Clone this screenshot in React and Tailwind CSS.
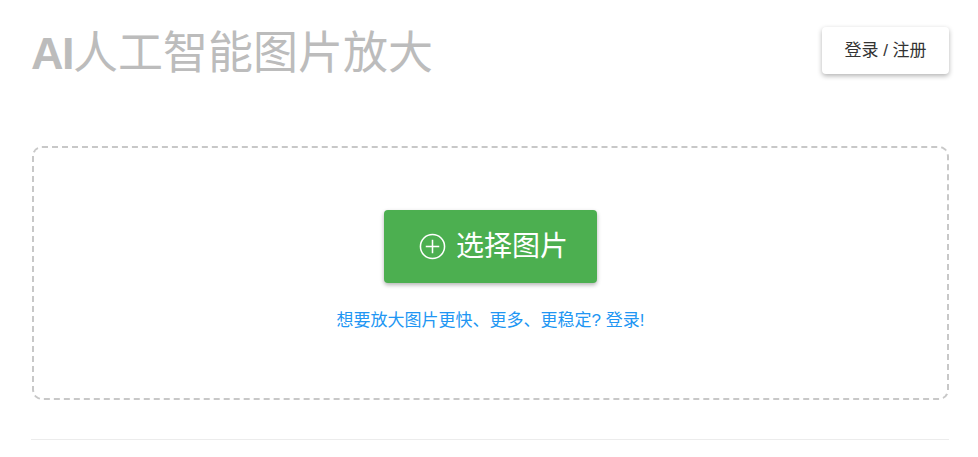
export default function App() {
  const font = { fontFamily: '"Liberation Sans", "Noto Sans CJK SC", sans-serif' };
  return (
    <div className="w-full bg-white pl-[31px] pr-[29px]" style={font}>
      <div className="flex items-center justify-between h-[47px] mt-[27px]">
        <h1 className="text-[45px] leading-none text-[#bcbcbc] font-normal tracking-normal mt-[6px]">
          <span className="font-bold tracking-[-1.5px]">AI</span>人工智能图片放大
        </h1>
        <button className="h-[47px] w-[127px] rounded-[4px] bg-white text-[17px] text-[#333] shadow-[0_2px_5px_rgba(0,0,0,0.3)]">
          登录 / 注册
        </button>
      </div>
      <div className="mt-[72px] ml-[1px] h-[254px] rounded-[10px] border-2 border-dashed border-[#c8c8c8] flex flex-col items-center">
        <button className="mt-[62px] h-[73px] w-[213px] rounded-[4px] bg-[#4caf50] text-white text-[28px] flex items-center justify-start pl-[35px] gap-[10px] shadow-[0_2px_4px_rgba(0,0,0,0.3)]">
          <svg width="27" height="27" viewBox="0 0 28 28" fill="none" stroke="white" strokeWidth="1.6">
            <circle cx="14" cy="14" r="12.5" />
            <line x1="14" y1="7" x2="14" y2="21" />
            <line x1="7" y1="14" x2="21" y2="14" />
          </svg>
          <span className="leading-none">选择图片</span>
        </button>
        <a className="mt-[29px] text-[17px] leading-none text-[#2196f3] cursor-pointer">
          想要放大图片更快、更多、更稳定? 登录!
        </a>
      </div>
      <div className="mt-[39px] h-px bg-[#ececec]" />
      <div className="h-[17px]" />
    </div>
  );
}
